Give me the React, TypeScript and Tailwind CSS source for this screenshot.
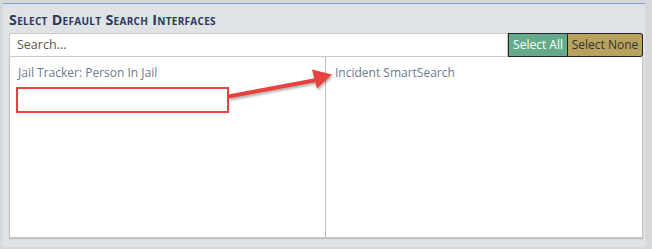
export default function App() {
  return (
    <div className="w-[652px] h-[249px] bg-[#d6d8da] pl-[3px] pr-[7px] pt-[3px] pb-[2px] font-['Open_Sans',sans-serif]">
      <div className="h-full bg-[#dfe3e6] border-t border-[#7f9fd6] pl-[6px] pr-[2px] pt-[7px] flex flex-col">
        <div className="text-[14.3px] font-bold text-[#2b3a58] [font-variant:small-caps] leading-[18px] tracking-[0.3px]">
          Select Default Search Interfaces
        </div>
        <div className="mt-[4px] flex h-[24px]">
          <div className="flex-1 bg-white border border-[#c9c9c9] rounded-tl-[3px] flex items-center pl-[7px] text-[12.5px] text-[#555]">
            Search...
          </div>
          <button className="w-[60px] bg-[#64ab8a] text-white text-[12px] border border-[#222] flex items-center justify-center">
            Select All
          </button>
          <button className="w-[75px] bg-[#b8a25e] text-[#333] text-[12px] border border-l-0 border-[#222] rounded-r-[3px] flex items-center justify-center">
            Select None
          </button>
        </div>
        <div className="h-[181px] bg-white border border-t-0 border-[#c4c4c4] shadow-[0_1px_1px_rgba(0,0,0,0.15)] flex relative">
          <div className="w-[316px] border-r border-[#bdbdbd] pl-[8px] pt-[8px]">
            <div className="text-[12px] text-[#6b7b8c] leading-[16px]">Jail Tracker: Person In Jail</div>
            <div className="mt-[6px] -ml-[2px] w-[213px] h-[26px] border-2 border-[#e5433f]" />
          </div>
          <div className="flex-1 pl-[9px] pt-[8px]">
            <div className="text-[12px] text-[#6b7b8c] leading-[16px]">Incident SmartSearch</div>
          </div>
          <svg className="absolute left-0 top-0" width="340" height="60" viewBox="0 0 340 60">
            <defs>
              <filter id="s" x="-10%" y="-50%" width="120%" height="200%">
                <feDropShadow dx="1" dy="2" stdDeviation="1.2" floodOpacity="0.3" />
              </filter>
            </defs>
            <g filter="url(#s)" fill="#e5433f">
              <path d="M218 37.5 L306 21 L307 25 L219 41.5 Z" />
              <path d="M302 12.5 L322 17.5 L307 31.5 Z" />
            </g>
          </svg>
        </div>
      </div>
    </div>
  );
}
